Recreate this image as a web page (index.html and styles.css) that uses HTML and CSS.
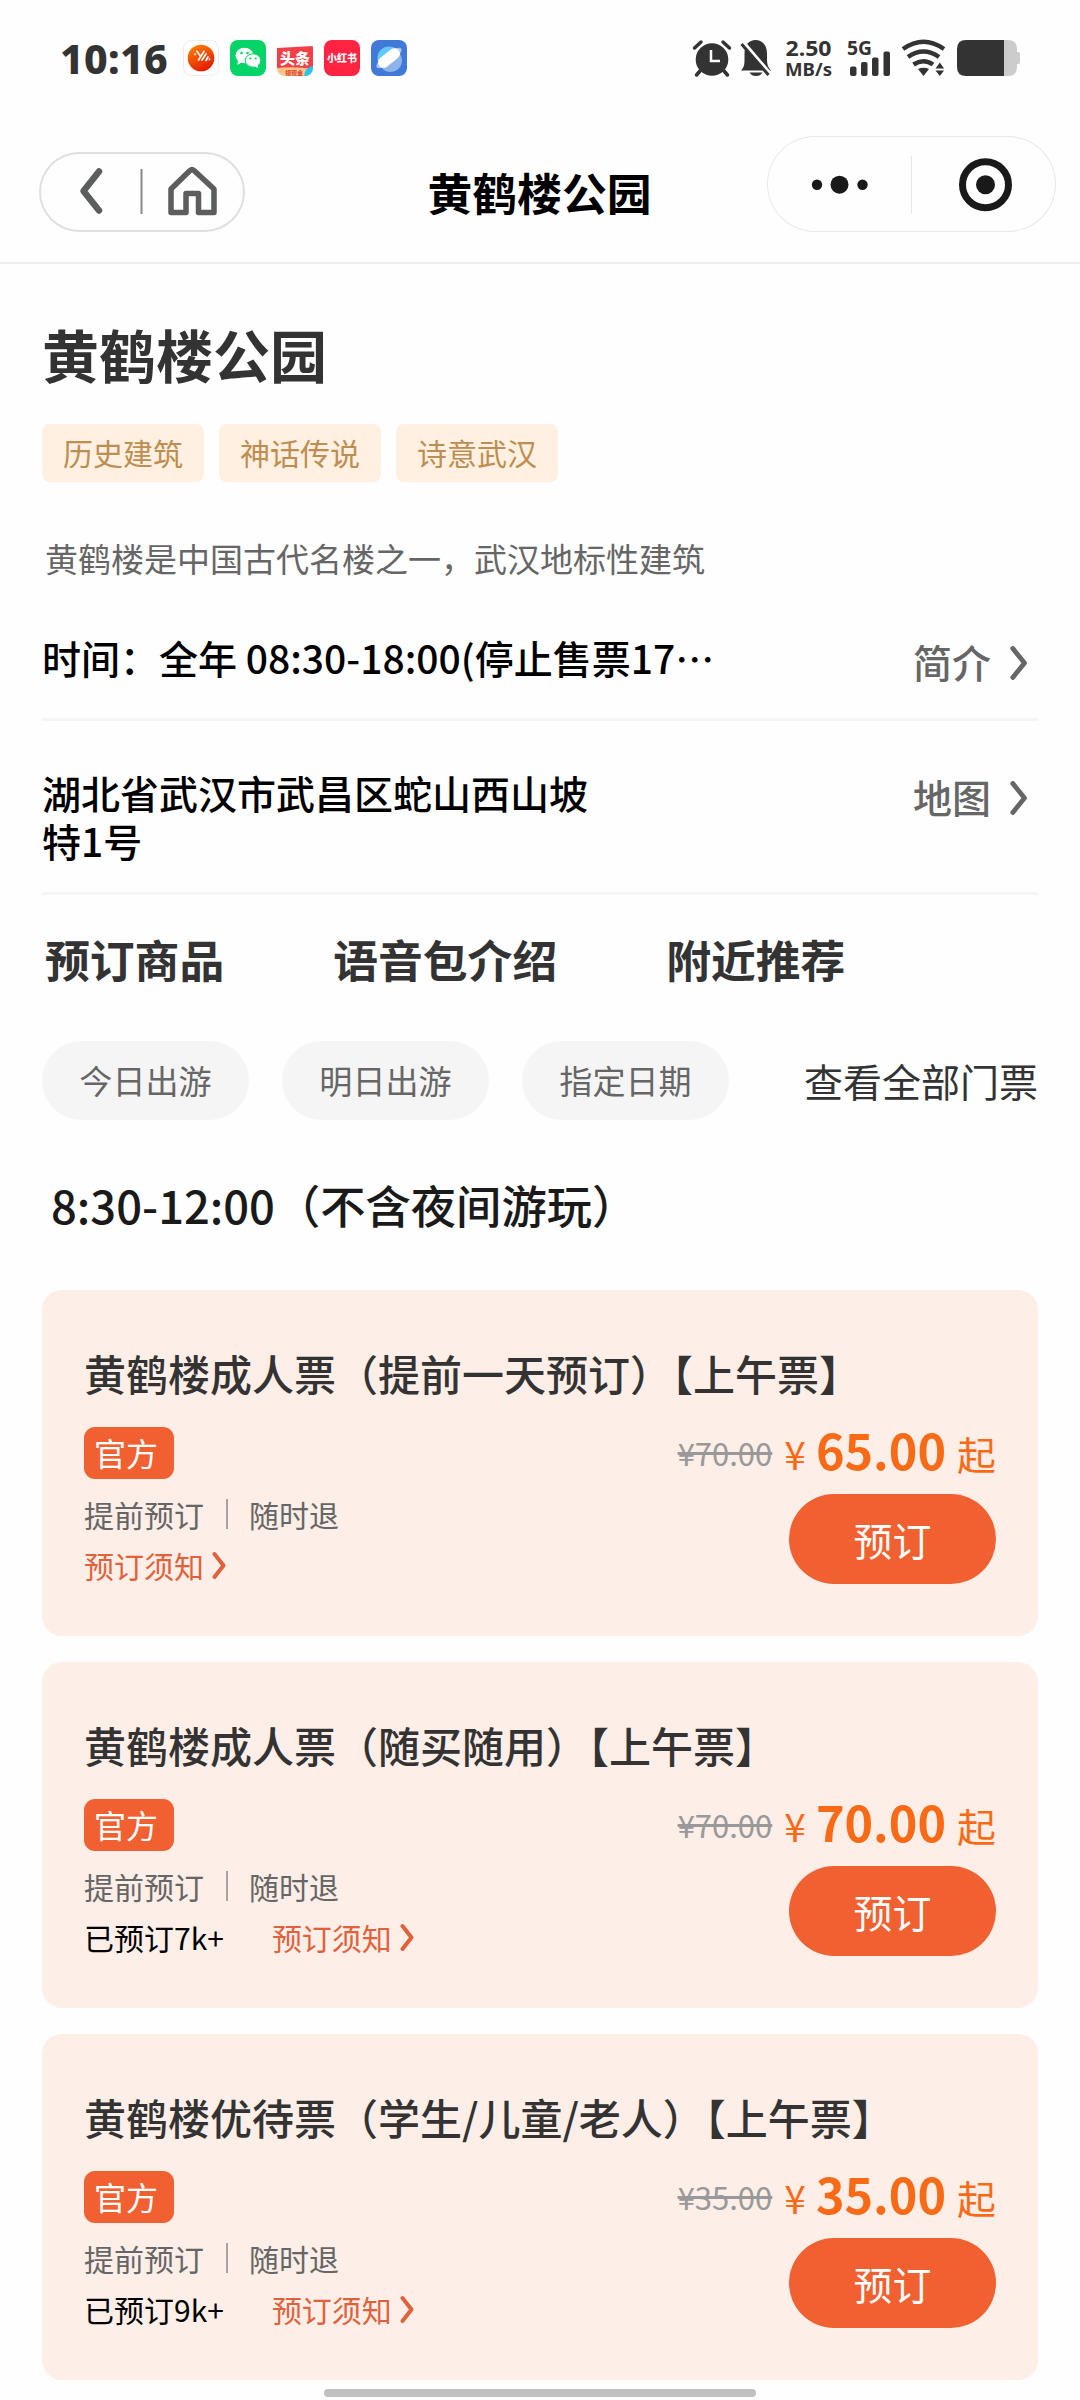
FILE: index.html
```html
<!DOCTYPE html>
<html lang="zh-CN">
<head>
<meta charset="utf-8">
<title>黄鹤楼公园</title>
<link rel="stylesheet" href="styles.css">
</head>
<body>
<svg class="defs" width="0" height="0" aria-hidden="true">
  <symbol id="chevron" viewBox="0 0 18 34"><path d="M2.800 2.500 L14.500 17 L2.800 31.500" fill="none" stroke="currentColor" stroke-width="4.800" stroke-linecap="round" stroke-linejoin="round"/></symbol>
  <symbol id="chevron-small" viewBox="0 0 16 28"><path d="M3.500 3 L12.500 14.500 L3.500 26" fill="none" stroke="currentColor" stroke-width="4" stroke-linecap="round" stroke-linejoin="round"/></symbol>
</svg>
<header class="status">
  <span class="clock">10:16</span>
  <div class="apps">
    <svg viewBox="0 0 36 36"><defs><linearGradient id="sun" x1="0" y1="0" x2=".5" y2="1"><stop offset="0" stop-color="#ff8a00"/><stop offset="1" stop-color="#e61e00"/></linearGradient></defs><rect x=".5" y=".5" width="35" height="35" rx="8" fill="#fff" stroke="#ececec"/><circle cx="18" cy="18" r="13.300" fill="url(#sun)"/><path d="M12 14v.5M14 11.500l3 4M21 11.500l-5.500 8.500M23 14l-4 6M25 17l-2 3.500M26.500 19v.5" stroke="#fff" stroke-width="1.700" stroke-linecap="round"/></svg>
    <svg viewBox="0 0 36 36"><rect width="36" height="36" rx="8" fill="#07d468"/><path d="M8 20l-.5 5 4.500-3z" fill="#fff"/><ellipse cx="14.500" cy="15.500" rx="9" ry="7.700" fill="#fff"/><ellipse cx="23" cy="20.500" rx="7.800" ry="6.700" fill="#fff" stroke="#07d468" stroke-width="1"/><path d="M28 24v4l-4-2z" fill="#fff"/><g fill="#07d468"><circle cx="11.500" cy="13" r="1.300"/><circle cx="17.500" cy="13" r="1.300"/><circle cx="20.300" cy="18.500" r="1.100"/><circle cx="25.700" cy="18.500" r="1.100"/></g></svg>
    <svg viewBox="0 0 36 36"><defs><clipPath id="tile"><rect width="36" height="36" rx="8"/></clipPath></defs><g clip-path="url(#tile)"><rect width="36" height="36" fill="#fff"/><path d="M0 8L36 6V29H0z" fill="#f33f45"/><path d="M0 28Q18 26 36 29V36H0z" fill="#ffc48a"/><path d="M27 36Q28 27 36 26V36z" fill="#26c5e8"/></g><text x="18" y="23.500" class="toutiao">头条</text><text x="17" y="34.500" class="toutiao-sub">领现金</text></svg>
    <svg viewBox="0 0 36 36"><rect width="36" height="36" rx="8" fill="#ff2442"/><text x="18" y="22" class="xhs">小红书</text></svg>
    <svg viewBox="0 0 36 36"><rect width="36" height="36" rx="8" fill="#4179d8"/><circle cx="18" cy="18" r="11.500" fill="#63c8ff"/><path d="M29 14A11.500 11.500 0 0 1 10 27z" fill="#8eb4ea"/><ellipse cx="18" cy="18" rx="15.500" ry="5" transform="rotate(-38 18 18)" fill="#a9c4ee"/><rect x="5.500" y="12.500" width="25" height="11" rx="5.500" transform="rotate(-38 18 18)" fill="#fff"/></svg>
  </div>
  <svg class="indicators" viewBox="0 0 330 36">
    <g fill="#333">
      <circle cx="19" cy="19.500" r="16.300"/><path d="M7 31l-3.500 4M31 31l3.500 4M1.500 8L8 2M36.500 8L30 2" stroke="#333" stroke-width="3.500" stroke-linecap="round"/><path d="M18 10v11h9" fill="none" stroke="#fff" stroke-width="2.500"/>
      <path d="M48 30.500c3-3 3.500-6 3.500-11v-6C51.500 5 56 0 62.500 0S74 5 74 13.500v6c0 5 1 8 4 11zM56.500 32.500h13c-1.500 2.500-3.500 3.500-6.500 3.500s-5-1-6.500-3.500z"/><path d="M49.500 1.500L78 35" stroke="#fff" stroke-width="4"/><path d="M48.500 4L75.500 35" stroke="#333" stroke-width="3"/>
      <text x="92.500" y="16" class="speed" textLength="46" lengthAdjust="spacingAndGlyphs">2.50</text><text x="92" y="36" class="unit" textLength="47" lengthAdjust="spacingAndGlyphs">MB/s</text><text x="154" y="14.800" class="net" textLength="25" lengthAdjust="spacingAndGlyphs">5G</text>
      <rect x="157" y="26.500" width="6.500" height="9.500" rx="2"/><rect x="168" y="22" width="6.500" height="14" rx="2"/><rect x="179" y="17.500" width="6.500" height="18.500" rx="2"/><rect x="190.500" y="11.500" width="6.500" height="24.500" rx="2"/>
      <path d="M225 29q5.500-2.500 11 0l-5.500 7z"/><path d="M210 9q20.500-14.500 41 0M215 17q15.500-11 31 0M220.500 24.500q10-6.500 19.500 0" fill="none" stroke="#333" stroke-width="4.500"/><path d="M242.500 28.500l4.300-6 4.300 6zM242.500 30.500h8.600l-4.300 5.500z"/>
    </g>
    <path d="M309 0h6q9 0 9 9v3h1q2 0 2 2v8q0 2-2 2h-1v3q0 9-9 9h-6z" fill="#ccc"/><path d="M311 0v36h-38q-9 0-9-9V9q0-9 9-9z" fill="#333"/>
  </svg>
</header>
<nav class="nav">
  <div class="back-home">
    <svg viewBox="0 0 206 80"><path d="M60 19.500L44.500 39 60 58.500" fill="none" stroke="#5b5e5d" stroke-width="6.500" stroke-linecap="round" stroke-linejoin="round"/><path d="M102.500 17v45" stroke="#888" stroke-width="2"/><path d="M132 37L151 18.500q2-1.700 4 0L175 37V60.500H159.500V41.500H147V60.500H132z" fill="none" stroke="#5b5e5d" stroke-width="5.500" stroke-linejoin="round"/></svg>
  </div>
  <h1 class="nav-title">黄鹤楼公园</h1>
  <div class="capsule">
    <svg viewBox="0 0 289 96"><g fill="#191919"><circle cx="50" cy="48.700" r="5.200"/><circle cx="72.500" cy="48.700" r="9"/><circle cx="95.500" cy="48.700" r="5.200"/><circle cx="218.500" cy="48.700" r="9.500"/></g><path d="M144.500 20v58" stroke="#e8e8e8" stroke-width="1"/><circle cx="218.500" cy="48.700" r="23" fill="none" stroke="#191919" stroke-width="7"/></svg>
  </div>
</nav>
<main class="page">
  <h2 class="title">黄鹤楼公园</h2>
  <div class="tags"><span>历史建筑</span><span>神话传说</span><span>诗意武汉</span></div>
  <p class="desc">黄鹤楼是中国古代名楼之一，武汉地标性建筑</p>
  <div class="row hours"><p>时间：全年 08:30-18:00(停止售票17<span class="dots">⋯</span></p><a>简介<svg><use href="#chevron"/></svg></a></div>
  <div class="row address"><p>湖北省武汉市武昌区蛇山西山坡<br>特1号</p><a>地图<svg><use href="#chevron"/></svg></a></div>
  <div class="tabs"><span>预订商品</span><span>语音包介绍</span><span>附近推荐</span></div>
  <div class="dates"><span class="pill">今日出游</span><span class="pill">明日出游</span><span class="pill">指定日期</span><a>查看全部门票</a></div>
  <h3 class="session">8:30-12:00（不含夜间游玩）</h3>
  <section class="tickets">
    <article class="card">
      <h4>黄鹤楼成人票（提前一天预订）【上午票】</h4>
      <div class="body">
        <div class="info"><span class="badge">官方</span><p class="terms"><span>提前预订</span><span>随时退</span></p><p class="more"><a>预订须知<svg><use href="#chevron-small"/></svg></a></p></div>
        <div class="buy"><p class="price"><s>¥70.00</s><i>¥</i><b>65.00</b><em>起</em></p><button>预订</button></div>
      </div>
    </article>
    <article class="card">
      <h4>黄鹤楼成人票（随买随用）【上午票】</h4>
      <div class="body">
        <div class="info"><span class="badge">官方</span><p class="terms"><span>提前预订</span><span>随时退</span></p><p class="more"><span class="sold">已预订7k+</span><a>预订须知<svg><use href="#chevron-small"/></svg></a></p></div>
        <div class="buy"><p class="price"><s>¥70.00</s><i>¥</i><b>70.00</b><em>起</em></p><button>预订</button></div>
      </div>
    </article>
    <article class="card">
      <h4>黄鹤楼优待票（学生/儿童/老人）【上午票】</h4>
      <div class="body">
        <div class="info"><span class="badge">官方</span><p class="terms"><span>提前预订</span><span>随时退</span></p><p class="more"><span class="sold">已预订9k+</span><a>预订须知<svg><use href="#chevron-small"/></svg></a></p></div>
        <div class="buy"><p class="price"><s>¥35.00</s><i>¥</i><b>35.00</b><em>起</em></p><button>预订</button></div>
      </div>
    </article>
  </section>
</main>
<div class="home-indicator"></div>
</body>
</html>
```
FILE: styles.css
```css
* { box-sizing: border-box; margin: 0; padding: 0; }
body {
  position: relative;
  width: 1080px;
  height: 2400px;
  overflow: hidden;
  background: #fefefe;
  color: #333;
  font-family: "Noto Sans CJK SC", sans-serif;
}
svg { display: block; }
.defs { position: absolute; }

.status { display: flex; height: 116px; padding: 40px 60px 0 60px; }
.clock { width: 123px; font: 800 41px/36px "Noto Sans", sans-serif; letter-spacing: 0.3px; white-space: nowrap; }
.apps { display: flex; gap: 11px; }
.apps svg { width: 36px; height: 36px; }
.indicators { width: 330px; height: 36px; margin-left: auto; margin-right: -3px; overflow: visible; }
.indicators text { font-family: "Noto Sans", sans-serif; font-weight: 700; }
.speed { font-size: 21px; }
.unit { font-size: 17px; }
.net { font-size: 19px; }
.toutiao { font-size: 15px; font-weight: 900; text-anchor: middle; fill: #fff; }
.toutiao-sub { font-size: 6px; font-weight: 700; text-anchor: middle; fill: #d6432f; }
.xhs { font-size: 10px; font-weight: 900; text-anchor: middle; fill: #fff; }

.nav {
  display: flex;
  justify-content: space-between;
  height: 148px;
  padding: 20px 24px 0 39px;
  border-bottom: 2px solid #efefef;
}
.back-home { width: 206px; height: 80px; margin-top: 16px; border-radius: 40px; box-shadow: inset 0 0 0 2px #e0e0e0; }
.nav-title { margin: 14px 0 0 67px; font-size: 44.8px; line-height: 84px; font-weight: 700; color: #000; }
.capsule { width: 289px; height: 96px; border-radius: 48px; box-shadow: inset 0 0 0 1px #e8e8e8; }

.page { padding: 53px 42px 0; }
.title { font-size: 57px; line-height: 72px; font-weight: 700; }
.tags { display: flex; gap: 15px; margin-top: 35px; }
.tags span { width: 162px; height: 58px; border-radius: 8px; background: #fff0e1; color: #bd8d52; font-size: 30px; line-height: 56px; text-align: center; }
.desc { margin: 51px 0 0 3px; font-size: 33px; line-height: 50px; color: #666; }
.row { display: flex; justify-content: space-between; border-bottom: 3px solid #f5f5f5; font-size: 39px; line-height: 48px; font-weight: 500; color: #000; }
.row a { display: flex; align-items: center; gap: 19px; height: 48px; margin-top: 4px; padding-right: 10px; color: #666; }
.row svg { width: 18px; height: 34px; margin-top: 4px; }
.hours { height: 138px; padding-top: 50px; }
.address { height: 174px; padding-top: 47px; }
.tabs { display: flex; gap: 109px; margin: 34px 0 0 3px; font-size: 44.8px; line-height: 60px; font-weight: 700; }
.dates { display: flex; align-items: center; gap: 33px; margin-top: 52px; }
.pill { width: 207px; height: 79px; border-radius: 40px; background: #f5f5f5; color: #666; font-size: 33.1px; line-height: 79px; text-align: center; }
.dates a { margin-left: auto; font-size: 39px; line-height: 77px; }
.session { margin: 54px 0 0 9px; font-size: 45.3px; line-height: 60px; font-weight: 500; color: #1a1a1a; }
.tickets { display: grid; gap: 26px; margin-top: 56px; }
.card { height: 346px; padding: 53px 42px 0; border-radius: 20px; background: #fdeee7; }
.card h4 { font-size: 42px; line-height: 60px; font-weight: 500; white-space: nowrap; }
.body { display: flex; justify-content: space-between; }
.info { display: flex; flex-direction: column; align-items: flex-start; padding-top: 24px; }
.badge { width: 90px; height: 52px; padding-left: 10px; border-radius: 11px; background: #f06031; color: #fff; font-size: 32px; line-height: 50px; }
.terms { display: flex; align-items: center; height: 44px; margin-top: 13px; font-size: 30px; color: #666; }
.terms span + span { margin-left: 22px; padding-left: 21px; border-left: 2px solid #aaa2a0; line-height: 30px; }
.more { display: flex; align-items: center; gap: 48px; height: 44px; margin-top: 7px; font-size: 30px; }
.more a { display: flex; align-items: center; gap: 7px; color: #e0623c; }
.more svg { width: 16px; height: 28px; }
.sold { color: #000; }
.buy { display: flex; flex-direction: column; align-items: flex-end; }
.price { display: flex; align-items: baseline; height: 91px; padding-top: 7px; line-height: 78px; color: #f96a17; white-space: nowrap; }
.price s { font-size: 31px; color: #999; transform: translateY(-4px); }
.price i { margin-left: 12px; font-size: 38.9px; font-style: normal; }
.price b { margin-left: 10px; font-size: 48.5px; font-weight: 700; }
.price em { margin-left: 11px; font-size: 38.9px; font-style: normal; }
button { width: 207px; height: 90px; border: 0; border-radius: 45px; background: #f06031; color: #fff; font: 400 38.9px/88px "Noto Sans CJK SC", sans-serif; }
.home-indicator { position: absolute; left: 324px; top: 2389px; width: 432px; height: 8px; border-radius: 4px; background: #c1c1c1; }
```
